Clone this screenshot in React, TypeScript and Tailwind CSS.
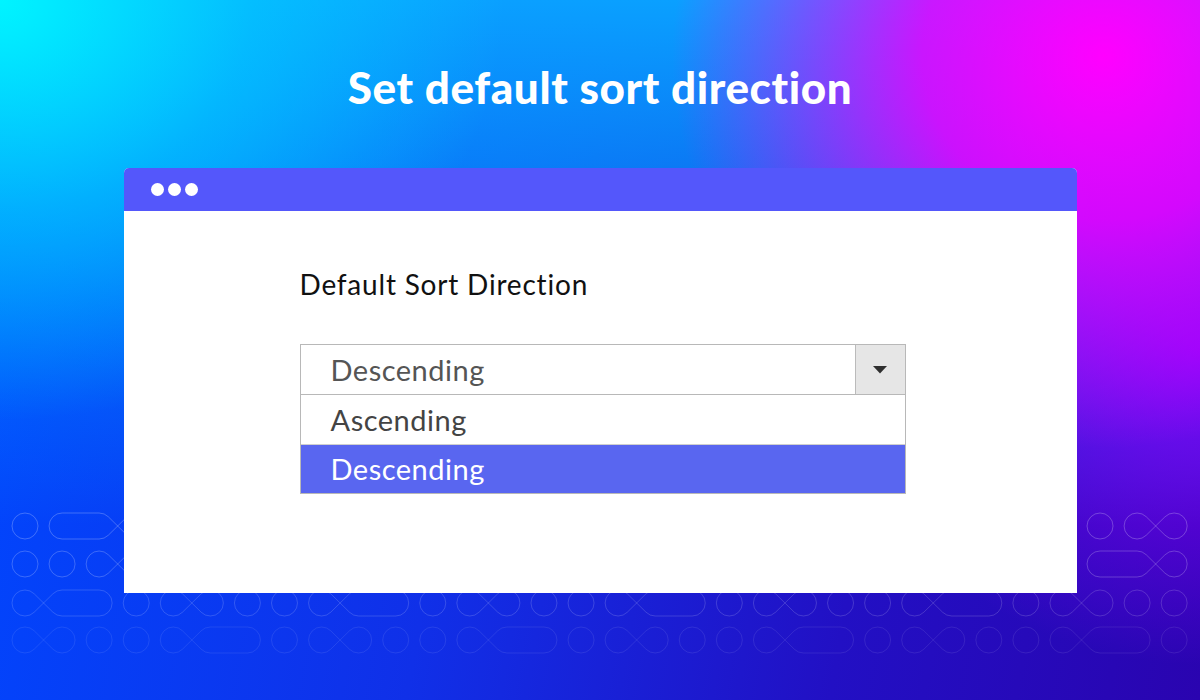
const R = 13;
const PITCH = 37.07;
const cx = (i: number) => 25 + PITCH * i;

// junction string: char i joins cell i and cell i+1 (' ' none, 'x' infinity cross, '-' pill)
const fill = (s: string) => s.padEnd(25, ' ').slice(0, 25);
const rows = [
  { y: 26, o: 0.24, j: ' -x' + fill('  x   x-  x   x-  x   x- ') + '  x' },
  { y: 64, o: 0.22, j: '  x' + fill('x   x-  x   x-  x   x-  ') + ' -x' },
  { y: 103, o: 0.16, j: 'x-  x   '.repeat(4).slice(0, 31) },
  { y: 140, o: 0.09, j: 'x   x-  '.repeat(4).slice(0, 31) },
];

const cellPath = (x: number, y: number, L: string, Rj: string) => {
  const pt = (a: number) => {
    const t = (a * Math.PI) / 180;
    return `${(x + R * Math.cos(t)).toFixed(2)} ${(y - R * Math.sin(t)).toFixed(2)}`;
  };
  if (L === ' ' && Rj === ' ') {
    return `M ${x - R} ${y} a ${R} ${R} 0 1 0 ${2 * R} 0 a ${R} ${R} 0 1 0 ${-2 * R} 0 `;
  }
  const right: Record<string, number[] | null> = { ' ': null, x: [-45, 45], '-': [-90, 90] };
  const left: Record<string, number[] | null> = { ' ': null, x: [135, 225], '-': [90, 270] };
  const rr = right[Rj];
  const ll = left[L];
  let arcs: number[][] = [];
  if (!rr && ll) arcs = [[ll[1], ll[0] + 360]];
  else if (!ll && rr) arcs = [[rr[1], rr[0] + 360]];
  else if (ll && rr) arcs = [[rr[1], ll[0]], [ll[1], rr[0] + 360]];
  return arcs
    .filter(([a, b]) => b - a > 0.1)
    .map(([a, b]) => `M ${pt(a)} A ${R} ${R} 0 ${b - a > 180 ? 1 : 0} 0 ${pt(b)} `)
    .join('');
};

const rowPath = (y: number, j: string) => {
  let d = '';
  const k = R * Math.SQRT1_2;
  for (let i = 0; i < 32; i++) {
    const L = i === 0 ? ' ' : j[i - 1];
    const Rj = i === 31 ? ' ' : j[i];
    d += cellPath(cx(i), y, L, Rj);
    if (Rj === '-') {
      d += `M ${cx(i)} ${y - R} L ${cx(i + 1)} ${y - R} M ${cx(i)} ${y + R} L ${cx(i + 1)} ${y + R} `;
    } else if (Rj === 'x') {
      d += `M ${cx(i) + k} ${y - k} L ${cx(i + 1) - k} ${y + k} M ${cx(i) + k} ${y + k} L ${cx(i + 1) - k} ${y - k} `;
    }
  }
  return d;
};

const Pattern = () => (
  <svg className="absolute left-0 top-[500px]" width="1200" height="170" viewBox="0 0 1200 170" fill="none">
    {rows.map((r) => (
      <path key={r.y} d={rowPath(r.y, r.j)} stroke="#ffffff" strokeOpacity={r.o} strokeWidth="1" />
    ))}
  </svg>
);

export default function App() {
  return (
    <div className="relative w-[1200px] h-[700px] overflow-hidden flex flex-col items-center bg-[radial-gradient(ellipse_36%_56%_at_92%_8%,#ff00ff_0%,rgba(235,0,255,0.85)_42%,rgba(170,0,255,0)_100%),radial-gradient(ellipse_42%_60%_at_0%_0%,#00f4ff_0%,rgba(0,210,255,0.6)_50%,rgba(0,170,255,0)_100%),radial-gradient(ellipse_30%_45%_at_100%_50%,rgba(140,0,255,0.9)_0%,rgba(120,0,255,0)_100%),linear-gradient(to_bottom,rgba(10,160,255,1)_0%,rgba(0,140,255,0.5)_45%,rgba(0,120,255,0)_75%),linear-gradient(100deg,#0048ff_0%,#1030e8_40%,#2210c4_72%,#2a04b0_100%)]">
      <Pattern />
      <h1 className="relative pt-[59px] text-white text-[44px] leading-[56px] font-black tracking-[0.6px] font-['Lato',sans-serif]">
        Set default sort direction
      </h1>
      <div className="relative z-10 mt-[53px] w-[953px] rounded-t-[5px] overflow-hidden bg-white">
        <div className="h-[43px] bg-[#5457fb] flex items-center gap-[4px] pl-[27px]">
          <span className="w-[13px] h-[13px] rounded-full bg-white" />
          <span className="w-[13px] h-[13px] rounded-full bg-white" />
          <span className="w-[13px] h-[13px] rounded-full bg-white" />
        </div>
        <div className="h-[382px] pl-[176px] pt-[57px] font-['Lato',sans-serif]">
          <p className="text-[28px] leading-[32px] tracking-[0.8px] text-[#111]">Default Sort Direction</p>
          <div className="mt-[44px] w-[606px]">
            <div className="h-[51px] flex border-[1.5px] border-[#b8b8b8]">
              <div className="flex-1 flex items-center pl-[30px] text-[29px] tracking-[0.5px] text-[#555]">Descending</div>
              <div className="w-[50px] bg-[#e6e6e6] border-l-[1.5px] border-[#bbbbbb] flex items-center justify-center">
                <svg width="14" height="8" viewBox="0 0 14 8">
                  <path d="M0 0 L14 0 L7 7.5 Z" fill="#2f2f2f" />
                </svg>
              </div>
            </div>
            <div className="border-x-[1.5px] border-b-[1.5px] border-[#b8b8b8]">
              <div className="h-[50px] flex items-center pl-[30px] text-[29px] tracking-[0.5px] text-[#444] border-b border-[#cfcfcf]">Ascending</div>
              <div className="h-[48px] flex items-center pl-[30px] text-[29px] tracking-[0.5px] text-white bg-[#5966f0]">Descending</div>
            </div>
          </div>
        </div>
      </div>
    </div>
  );
}
